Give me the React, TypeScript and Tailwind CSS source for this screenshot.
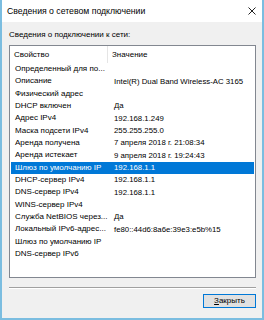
const rows: [string, string][] = [
  ["Определенный для по...", ""],
  ["Описание", "Intel(R) Dual Band Wireless-AC 3165"],
  ["Физический адрес", ""],
  ["DHCP включен", "Да"],
  ["Адрес IPv4", "192.168.1.249"],
  ["Маска подсети IPv4", "255.255.255.0"],
  ["Аренда получена", "7 апреля 2018 г. 21:08:34"],
  ["Аренда истекает", "9 апреля 2018 г. 19:24:43"],
  ["Шлюз по умолчанию IP", "192.168.1.1"],
  ["DHCP-сервер IPv4", "192.168.1.1"],
  ["DNS-сервер IPv4", "192.168.1.1"],
  ["WINS-сервер IPv4", ""],
  ["Служба NetBIOS через...", "Да"],
  ["Локальный IPv6-адрес...", "fe80::44d6:8a6e:39e3:e5b%15"],
  ["Шлюз по умолчанию IP", ""],
  ["DNS-сервер IPv6", ""],
];

const SELECTED = 8;

const App = () => {
  return (
    <div className="w-[264px] h-[320px] bg-white font-['Liberation_Sans',Arial,sans-serif] text-black">
      <div className="w-[264px] h-[320px] flex flex-col border-l-2 border-r-2 border-b-2 border-[#7bbde0]">
        {/* title bar */}
        <div className="h-[22px] bg-white flex items-center justify-between pl-[5px] pr-[6px]">
          <span className="text-[8.7px] leading-none">Сведения о сетевом подключении</span>
          <svg width="8" height="8" viewBox="0 0 8 8">
            <path d="M0.5 0.5 L7.5 7.5 M7.5 0.5 L0.5 7.5" stroke="#222" strokeWidth="1" />
          </svg>
        </div>

        {/* body */}
        <div className="flex-1 bg-[#f0f0f0] pl-[7px] pr-[6px] pt-[8px] flex flex-col">
          <div className="text-[8px] leading-[10px]">Сведения о подключении к сети:</div>

          <div className="mt-[5px] h-[233px] border border-[#828790] bg-white flex flex-col">
            <div className="h-[17px] flex text-[8px] items-stretch">
              <div className="w-[98px] flex items-center pl-[4px] border-r border-[#e5e5e5]">Свойство</div>
              <div className="flex-1 flex items-center pl-[4px]">Значение</div>
            </div>
            <div className="px-[1px]">
              {rows.map(([name, value], i) => (
                <div
                  key={i}
                  className={`h-[12.33px] flex items-center text-[8px] whitespace-nowrap ${
                    i === SELECTED ? "bg-[#0078d7] text-white" : ""
                  }`}
                >
                  <div className="w-[98px] pl-[4px]">{name}</div>
                  <div className="flex-1 pl-[5px] text-[7.8px]">{value}</div>
                </div>
              ))}
            </div>
          </div>

          <div className="mt-[9px] border-t border-[#a0a0a0] border-b border-b-white"></div>

          <div className="flex justify-end mt-[5px]">
            <button className="w-[53px] h-[14px] border border-[#0078d7] bg-[#e1e1e1] text-[8px] leading-none flex items-center justify-center">
              <span>
                <span className="underline">З</span>акрыть
              </span>
            </button>
          </div>
        </div>
      </div>
    </div>
  );
};

export default App;
